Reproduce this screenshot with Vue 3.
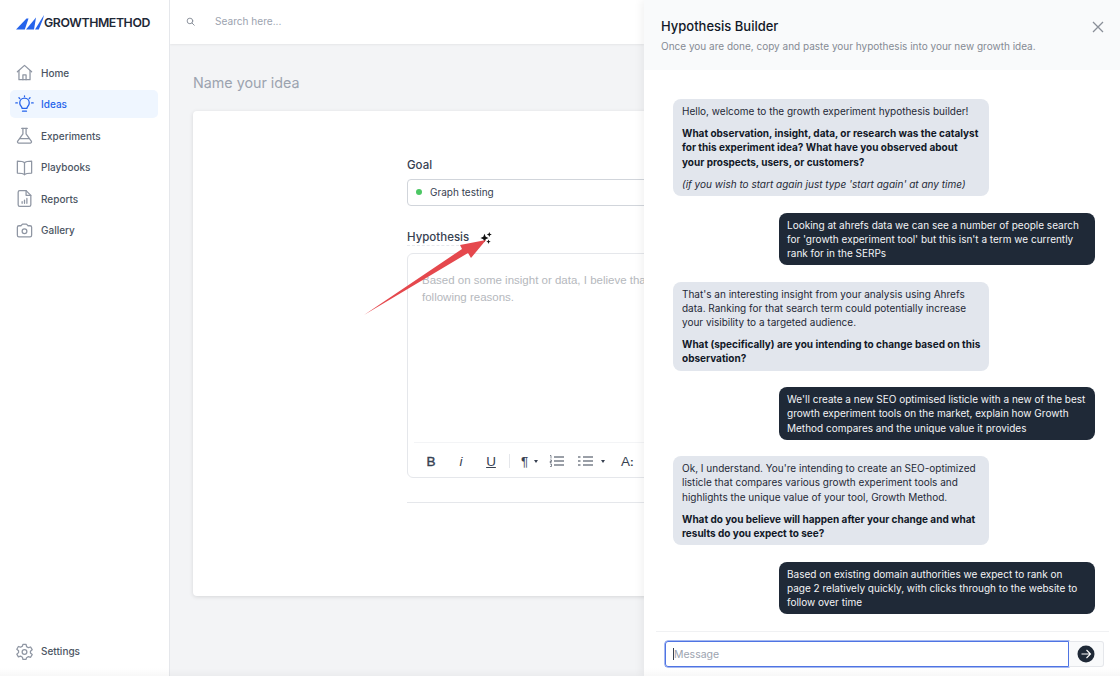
<template>
  <div class="app">
    <aside class="sidebar">
      <div class="logo">
        <svg width="28" height="15" viewBox="0 0 28 15">
          <path d="M0 14.500 L10.500 3.500 L12.500 3.500 L8.800 14.500 Z" fill="#2563eb" />
          <path d="M10 14.500 L20 2.500 L18 14.500 Z" fill="#2563eb" />
          <path d="M19 14.500 L28 0 L27 4 L22.800 14.500 Z" fill="#2563eb" />
        </svg>
        <span class="logo-text">GROWTHMETHOD</span>
      </div>
      <nav class="nav">
        <a v-for="item in navItems" :key="item.label" class="nav-item" :class="{ active: item.active }">
          <svg class="nav-icon" width="19" height="19" viewBox="0 0 24 24" fill="none" stroke="currentColor" stroke-width="1.600" stroke-linecap="round" stroke-linejoin="round">
            <path v-for="(d, i) in item.paths" :key="i" :d="d" />
          </svg>
          <span>{{ item.label }}</span>
        </a>
      </nav>
      <a class="nav-item settings">
        <svg class="nav-icon" width="19" height="19" viewBox="0 0 24 24" fill="none" stroke="currentColor" stroke-width="1.600" stroke-linecap="round" stroke-linejoin="round">
          <path d="M10 3h4l.6 2.800 2.400 1.400 2.700-.9 2 3.400-2.200 1.900v2.400l2.200 1.900-2 3.400-2.700-.9-2.400 1.400L14 22h-4l-.6-2.800L7 17.800l-2.700.9-2-3.400 2.200-1.900v-2.400L2.300 9.100l2-3.400 2.700.9 2.400-1.400z" />
          <circle cx="12" cy="12.500" r="3" />
        </svg>
        <span>Settings</span>
      </a>
    </aside>

    <div class="main">
      <header class="topbar">
        <svg width="9" height="9" viewBox="0 0 24 24" fill="none" stroke="#8b919b" stroke-width="2.600" stroke-linecap="round">
          <circle cx="10.500" cy="10.500" r="7.500" />
          <path d="M16 16l6 6" />
        </svg>
        <span class="search">Search here...</span>
      </header>
      <div class="content">
        <h1 class="title">Name your idea</h1>
        <section class="card">
          <div class="form">
            <div class="label">Goal</div>
            <div class="select">
              <span class="dot"></span>
              <span>Graph testing</span>
            </div>
            <div class="label hypothesis-row">
              <span class="hypothesis">Hypothesis</span>
              <svg width="12" height="12" viewBox="0 0 12 12" fill="#111">
                <path d="M4.500 1.800 L5.700 4.800 L8.500 6 L5.700 7.200 L4.500 10.200 L3.300 7.200 L.5 6 L3.300 4.800 Z" />
                <path d="M9.300 0 L10 1.800 L11.800 2.500 L10 3.200 L9.300 5 L8.600 3.200 L6.800 2.500 L8.600 1.800 Z" />
                <path d="M8.500 7.500 L9.100 9.100 L10.700 9.700 L9.100 10.300 L8.500 11.900 L7.900 10.300 L6.300 9.700 L7.900 9.100 Z" />
              </svg>
            </div>
            <div class="editor">
              <div class="editor-body">Based on some insight or data, I believe that this will happen for the following reasons.</div>
              <div class="toolbar">
                <span class="tool bold">B</span>
                <span class="tool italic">i</span>
                <span class="tool underline">U</span>
                <span class="tool-sep"></span>
                <span class="tool para">¶<i class="caret para-caret"></i></span>
                <svg class="list-icon" width="15" height="12" viewBox="0 0 15 12" fill="none" stroke="#374151" stroke-width="1.200">
                  <path d="M5 2h10M5 6h10M5 10h10" />
                  <path d="M1 .5h1v3M1 5h1.500v1.500h-1.500v1h1.500M1 9h1.500v2.500h-1.500" stroke-width=".6" />
                </svg>
                <svg class="list-icon bullets" width="15" height="12" viewBox="0 0 15 12" fill="none" stroke="#374151" stroke-width="1.200">
                  <path d="M5 2h10M5 6h10M5 10h10M0 2h2.500M0 6h2.500M0 10h2.500" />
                </svg>
                <i class="caret list-caret"></i>
                <span class="tool font-size">A<small>:</small></span>
              </div>
            </div>
            <hr class="divider" />
          </div>
        </section>
      </div>
    </div>

    <svg class="arrow" width="130" height="86" viewBox="0 0 130 86">
      <path d="M0 81 L98 15 L96 11 L122 6 L107 24 L104 19 Z" fill="#e5484d" />
    </svg>

    <aside class="drawer">
      <header class="drawer-head">
        <div>
          <h2>Hypothesis Builder</h2>
          <p>Once you are done, copy and paste your hypothesis into your new growth idea.</p>
        </div>
        <svg class="close" width="12" height="12" viewBox="0 0 12 12" stroke="#8a8f98" stroke-width="1.300" fill="none">
          <path d="M1 1l10 10M11 1L1 11" />
        </svg>
      </header>
      <div class="chat">
        <div class="bubble bot">
          <p>Hello, welcome to the growth experiment hypothesis builder!</p>
          <p><b>What observation, insight, data, or research was the catalyst for this experiment idea? What have you observed about your prospects, users, or customers?</b></p>
          <p><em>(if you wish to start again just type 'start again' at any time)</em></p>
        </div>
        <div class="bubble user">Looking at ahrefs data we can see a number of people search for 'growth experiment tool' but this isn't a term we currently rank for in the SERPs</div>
        <div class="bubble bot">
          <p>That's an interesting insight from your analysis using Ahrefs data. Ranking for that search term could potentially increase your visibility to a targeted audience.</p>
          <p><b>What (specifically) are you intending to change based on this observation?</b></p>
        </div>
        <div class="bubble user">We'll create a new SEO optimised listicle with a new of the best growth experiment tools on the market, explain how Growth Method compares and the unique value it provides</div>
        <div class="bubble bot">
          <p>Ok, I understand. You're intending to create an SEO-optimized listicle that compares various growth experiment tools and highlights the unique value of your tool, Growth Method.</p>
          <p><b>What do you believe will happen after your change and what results do you expect to see?</b></p>
        </div>
        <div class="bubble user">Based on existing domain authorities we expect to rank on page 2 relatively quickly, with clicks through to the website to follow over time</div>
        <div class="bubble bot cut"></div>
      </div>
      <footer class="composer">
        <div class="input"><span class="cursor"></span>Message</div>
        <div class="send">
          <svg width="18" height="18" viewBox="0 0 18 18">
            <circle cx="9" cy="9" r="8.500" fill="#1f2937" />
            <path d="M4.500 9h9M9.500 5l4 4-4 4" fill="none" stroke="#fff" stroke-width="1.100" />
          </svg>
        </div>
      </footer>
    </aside>
    <div class="window-fade"></div>
  </div>
</template>

<script setup>
const navItems = [
  { label: 'Home', paths: ['M3 11l9-8 9 8', 'M5 9.500V21h14V9.500', 'M10 21v-6h4v6'] },
  {
    label: 'Ideas',
    active: true,
    paths: [
      'M9 17c0-2-3-3.500-3-7a6 6 0 0 1 12 0c0 3.500-3 5-3 7z',
      'M9.500 20.500h5',
      'M12 1v1M3 10H1M23 10h-2M5 3.500l1 1M19 3.500l-1 1',
    ],
  },
  { label: 'Experiments', paths: ['M8.500 3h7', 'M10 3v7L3.500 19a1.500 1.500 0 0 0 1 2.500h15a1.500 1.500 0 0 0 1-2.500L14 10V3', 'M6.500 16h11'] },
  { label: 'Playbooks', paths: ['M12 6c-2-2-6-2-9-2v15c3 0 7 0 9 2 2-2 6-2 9-2V4c-3 0-7 0-9 2z', 'M12 6v15'] },
  { label: 'Reports', paths: ['M6 2h8l6 6v12a2 2 0 0 1-2 2H6a2 2 0 0 1-2-2V4a2 2 0 0 1 2-2z', 'M14 2v6h6', 'M9 18v-2M12 18v-4M15 18v-6'] },
  { label: 'Gallery', paths: ['M3 8a2 2 0 0 1 2-2h2.500l2-2h5l2 2H19a2 2 0 0 1 2 2v10a2 2 0 0 1-2 2H5a2 2 0 0 1-2-2z', 'M15 13a3 3 0 1 1-6 0 3 3 0 0 1 6 0z'] },
]
</script>

<style>
html,
body {
  margin: 0;
  height: 100%;
  overflow: hidden;
}
</style>

<style scoped>
.app {
  position: relative;
  display: flex;
  width: 1120px;
  height: 676px;
  overflow: hidden;
  font-family: Inter, "Liberation Sans", sans-serif;
  font-size: 10px;
  color: #374151;
  background: #f3f4f6;
}
.sidebar {
  display: flex;
  flex-direction: column;
  flex: none;
  width: 170px;
  height: 100%;
  box-sizing: border-box;
  padding: 0 11px 0 10px;
  background: #fff;
  border-right: 1px solid #e5e7eb;
}
.logo {
  display: flex;
  align-items: center;
  height: 44px;
  padding-left: 6px;
}
.logo-text {
  font-size: 12.300px;
  font-weight: 600;
  letter-spacing: -0.4px;
  color: #1f2937;
}
.nav {
  display: flex;
  flex-direction: column;
  gap: 3.500px;
  margin-top: 14.700px;
  flex: 1;
}
.nav-item {
  display: flex;
  align-items: center;
  gap: 7px;
  height: 28px;
  padding-left: 5px;
  border-radius: 5px;
  font-weight: 500;
  color: #4b5563;
}
.nav-icon {
  flex: none;
  color: #8f96a3;
}
.nav-item.active {
  background: #eff6ff;
  color: #2563eb;
}
.nav-item.active .nav-icon {
  color: #2563eb;
}
.settings {
  margin-bottom: 11px;
}
.main {
  flex: none;
  width: 474px;
  overflow: hidden;
}
.topbar {
  display: flex;
  align-items: center;
  gap: 20px;
  height: 44px;
  padding: 0 0 2px 16px;
  box-sizing: border-box;
  background: #fff;
  box-shadow: 0 1px 2px rgba(0, 0, 0, 0.06);
}
.search {
  font-size: 10.100px;
  color: #9ca3af;
}
.content {
  padding: 0 0 0 23px;
}
.title {
  margin: 0;
  padding-top: 30px;
  font-size: 14.300px;
  line-height: 18px;
  font-weight: 400;
  color: #9ca3af;
}
.card {
  width: 600px;
  height: 485px;
  margin-top: 19px;
  background: #fff;
  border-radius: 4px;
  box-shadow: 0 1px 4px rgba(0, 0, 0, 0.12);
}
.form {
  width: 400px;
  margin-left: 214px;
  padding-top: 46px;
}
.label {
  font-size: 11.500px;
  font-weight: 500;
  line-height: 16px;
  color: #374151;
}
.select {
  display: flex;
  align-items: center;
  gap: 8px;
  height: 24px;
  margin-top: 6px;
  padding: 0 0 1px 8px;
  border: 1px solid #d1d5db;
  border-radius: 4px;
  color: #374151;
}
.dot {
  width: 6px;
  height: 6px;
  border-radius: 50%;
  background: #4cc764;
}
.hypothesis-row {
  display: flex;
  align-items: center;
  gap: 11px;
  margin-top: 23px;
}
.hypothesis {
  border-bottom: 1px dashed #e5e7eb;
}
.editor {
  box-sizing: border-box;
  height: 225px;
  margin-top: 7px;
  border: 1px solid #e5e7eb;
  border-radius: 6px;
  display: flex;
  flex-direction: column;
}
.editor-body {
  flex: 1;
  padding: 18px 14px;
  font-size: 11.500px;
  line-height: 17px;
  color: #b5b8bd;
  font-family: "Liberation Sans", sans-serif;
}
.toolbar {
  display: flex;
  align-items: center;
  box-sizing: border-box;
  height: 35px;
  margin: 0 6px;
  padding: 2px 0 0 2px;
  border-top: 1px solid #f3f4f6;
  color: #374151;
}
.tool {
  font-size: 13.500px;
  font-family: "Liberation Sans", sans-serif;
  text-align: center;
}
.bold {
  font-weight: 400;
  -webkit-text-stroke: 0.4px #374151;
  width: 30px;
}
.italic {
  font-style: italic;
  width: 30px;
}
.underline {
  text-decoration: underline;
  width: 30px;
}
.tool-sep {
  width: 1px;
  height: 14px;
  margin-left: 3px;
  margin-right: 11px;
  background: #e5e7eb;
}
.para {
  display: flex;
  align-items: center;
  width: 28px;
}
.caret {
  display: inline-block;
  border-left: 2.500px solid transparent;
  border-right: 2.500px solid transparent;
  border-top: 3px solid #374151;
}
.para-caret {
  margin-left: 6px;
}
.list-caret {
  margin-left: 8px;
}
.list-icon {
  margin-right: 14px;
}
.bullets {
  margin-right: 0;
}
.font-size {
  margin-left: 16px;
}
.font-size small {
  font-size: 11px;
  font-weight: 700;
}
.divider {
  margin: 24px 0 0;
  border: 0;
  border-top: 1px solid #e5e7eb;
}
.arrow {
  position: absolute;
  left: 364px;
  top: 234px;
}
.drawer {
  position: absolute;
  top: 0;
  right: 0;
  display: flex;
  flex-direction: column;
  width: 476px;
  height: 100%;
  background: #fff;
  box-shadow: -3px 0 8px rgba(0, 0, 0, 0.05);
}
.drawer-head {
  display: flex;
  justify-content: space-between;
  flex: none;
  height: 70px;
  box-sizing: border-box;
  padding: 17px 16px 0 17px;
  background: #f9fafb;
}
.drawer-head h2 {
  margin: 0;
  font-size: 13px;
  line-height: 19px;
  font-weight: 500;
  color: #111827;
}
.drawer-head p {
  margin: 3px 0 0;
  font-size: 10px;
  line-height: 14px;
  color: #858a94;
}
.close {
  margin-top: 4px;
}
.chat {
  flex: 1;
  min-height: 0;
  overflow: hidden;
  display: flex;
  flex-direction: column;
  gap: 16.500px;
  padding: 29px 25px 0 29px;
}
.bubble {
  box-sizing: border-box;
  flex: none;
  padding: 5px 8px 5px 9px;
  border-radius: 8px;
  font-size: 10px;
  line-height: 14.200px;
}
.bubble p {
  margin: 0 0 8px;
}
.bubble p:last-child {
  margin-bottom: 0;
}
.bot {
  width: 316px;
  background: #e2e6ed;
  color: #1f2937;
}
.bot b {
  color: #111827;
}
.user {
  align-self: flex-end;
  width: 316px;
  padding-left: 8px;
  background: #1f2937;
  color: #f3f4f6;
}
.cut {
  height: 30px;
}
.composer {
  display: flex;
  align-items: center;
  flex: none;
  height: 44px;
  margin-left: 12px;
  margin-right: 11px;
  padding: 0 5px 0 9px;
  border-top: 1px solid #f0f1f3;
  background: #fff;
  position: relative;
}
.input {
  display: flex;
  align-items: center;
  box-sizing: border-box;
  flex: 1;
  height: 26px;
  padding-left: 7px;
  border: 1px solid #4f74e3;
  border-radius: 3px 0 0 3px;
  box-shadow: 0 0 0 0.5px #4f74e3;
  font-size: 10.500px;
  color: #9ca3af;
}
.cursor {
  width: 1px;
  height: 12px;
  background: #374151;
}
.send {
  display: flex;
  align-items: center;
  justify-content: center;
  width: 35px;
  height: 26px;
  box-sizing: border-box;
  border: 1px solid #e5e7eb;
  border-left: 0;
  border-radius: 0 3px 3px 0;
  background: #f9fafb;
}
.window-fade {
  position: absolute;
  left: 0;
  right: 0;
  bottom: 0;
  height: 8px;
  background: linear-gradient(to bottom, rgba(0, 0, 0, 0), rgba(0, 0, 0, 0.03));
  pointer-events: none;
}
</style>
